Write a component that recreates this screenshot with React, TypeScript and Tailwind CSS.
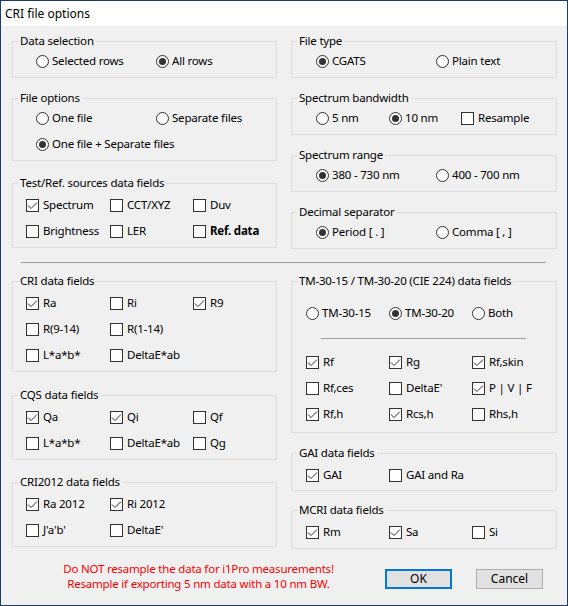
import React from "react";

type Item = { label: string; checked?: boolean; bold?: boolean; w?: string };

function CheckBox({ label, checked, bold, w }: Item) {
  return (
    <div className={`flex items-center h-[20px] shrink-0 ${w ?? ""}`}>
      <span className="w-[13px] h-[13px] border border-[#333333] bg-white flex items-center justify-center shrink-0">
        {checked && (
          <svg width="11" height="11" viewBox="0 0 11 11">
            <path d="M1 5.5 L4 8.5 L10 2.5" stroke="#333333" strokeWidth="1" fill="none" />
          </svg>
        )}
      </span>
      <span className={`ml-[4px] whitespace-nowrap ${bold ? "font-bold" : ""}`}>{label}</span>
    </div>
  );
}

function Radio({ label, checked, w }: Item) {
  return (
    <div className={`flex items-center h-[20px] shrink-0 ${w ?? ""}`}>
      <span className="w-[13px] h-[13px] rounded-full border border-[#333333] bg-white flex items-center justify-center shrink-0">
        {checked && <span className="w-[7px] h-[7px] rounded-full bg-[#333333]" />}
      </span>
      <span className="ml-[3px] whitespace-nowrap">{label}</span>
    </div>
  );
}

function Group({
  title,
  className,
  children,
}: {
  title: string;
  className?: string;
  children: React.ReactNode;
}) {
  return (
    <fieldset className={`border border-[#dcdcdc] m-0 p-0 min-w-0 ${className ?? ""}`}>
      <legend className="ml-[5px] px-[2px] leading-[16px]">{title}</legend>
      {children}
    </fieldset>
  );
}

export default function App() {
  return (
    <div className="w-[568px] h-[606px] border border-[#1d3b68] bg-[#f0f0f0] flex flex-col text-[11.5px] tracking-[-0.2px] leading-[16px] text-black font-['Noto_Sans',sans-serif] overflow-hidden">
      <div className="h-[25px] bg-white pl-[4px] flex items-center shrink-0 text-[12px] tracking-normal">CRI file options</div>

      <div className="px-[11px] pt-[7px] flex flex-col">
        {/* top section */}
        <div className="grid grid-cols-[265px_266px] gap-x-[14px] items-start">
          <div className="flex flex-col">
            <Group title="Data selection">
              <div className="pt-[2px] pb-[6px] pl-[23px] flex">
                <Radio label="Selected rows" w="w-[120px]" />
                <Radio label="All rows" checked />
              </div>
            </Group>
            <Group title="File options" className="mt-[12px]">
              <div className="pt-[2px] pb-[6px] pl-[23px] flex flex-col gap-[6px]">
                <div className="flex">
                  <Radio label="One file" w="w-[120px]" />
                  <Radio label="Separate files" />
                </div>
                <Radio label="One file + Separate files" checked />
              </div>
            </Group>
            <Group title="Test/Ref. sources data fields" className="mt-[14px]">
              <div className="pt-[4px] pb-[6px] pl-[13px] flex flex-col gap-[6px]">
                <div className="flex">
                  <CheckBox label="Spectrum" checked w="w-[84px]" />
                  <CheckBox label="CCT/XYZ" w="w-[83px]" />
                  <CheckBox label="Duv" />
                </div>
                <div className="flex">
                  <CheckBox label="Brightness" w="w-[84px]" />
                  <CheckBox label="LER" w="w-[83px]" />
                  <CheckBox label="Ref. data" bold />
                </div>
              </div>
            </Group>
          </div>

          <div className="flex flex-col">
            <Group title="File type">
              <div className="pt-[2px] pb-[6px] pl-[24px] flex">
                <Radio label="CGATS" checked w="w-[120px]" />
                <Radio label="Plain text" />
              </div>
            </Group>
            <Group title="Spectrum bandwidth" className="mt-[12px]">
              <div className="pt-[2px] pb-[6px] pl-[24px] flex">
                <Radio label="5 nm" w="w-[73px]" />
                <Radio label="10 nm" checked w="w-[72px]" />
                <CheckBox label="Resample" />
              </div>
            </Group>
            <Group title="Spectrum range" className="mt-[12px]">
              <div className="pt-[2px] pb-[6px] pl-[24px] flex">
                <Radio label="380 - 730 nm" checked w="w-[120px]" />
                <Radio label="400 - 700 nm" />
              </div>
            </Group>
            <Group title="Decimal separator" className="mt-[12px]">
              <div className="pt-[2px] pb-[6px] pl-[24px] flex">
                <Radio label="Period [ . ]" checked w="w-[120px]" />
                <Radio label="Comma [ , ]" />
              </div>
            </Group>
          </div>
        </div>

        {/* separator */}
        <div className="mt-[13px] mb-[10px] ml-[9px] w-[525px] h-px bg-[#a0a0a0]" />

        {/* bottom section */}
        <div className="grid grid-cols-[265px_266px] gap-x-[14px] items-start">
          <div className="flex flex-col">
            <Group title="CRI data fields">
              <div className="pt-[4px] pb-[6px] pl-[13px] flex flex-col gap-[6px]">
                <div className="flex">
                  <CheckBox label="Ra" checked w="w-[84px]" />
                  <CheckBox label="Ri" w="w-[83px]" />
                  <CheckBox label="R9" checked />
                </div>
                <div className="flex">
                  <CheckBox label="R(9-14)" w="w-[84px]" />
                  <CheckBox label="R(1-14)" w="w-[83px]" />
                </div>
                <div className="flex">
                  <CheckBox label="L*a*b*" w="w-[84px]" />
                  <CheckBox label="DeltaE*ab" w="w-[83px]" />
                </div>
              </div>
            </Group>
            <Group title="CQS data fields" className="mt-[15px]">
              <div className="pt-[4px] pb-[6px] pl-[13px] flex flex-col gap-[6px]">
                <div className="flex">
                  <CheckBox label="Qa" checked w="w-[84px]" />
                  <CheckBox label="Qi" checked w="w-[83px]" />
                  <CheckBox label="Qf" />
                </div>
                <div className="flex">
                  <CheckBox label="L*a*b*" w="w-[84px]" />
                  <CheckBox label="DeltaE*ab" w="w-[83px]" />
                  <CheckBox label="Qg" />
                </div>
              </div>
            </Group>
            <Group title="CRI2012 data fields" className="mt-[14px]">
              <div className="pt-[4px] pb-[6px] pl-[13px] flex flex-col gap-[6px]">
                <div className="flex">
                  <CheckBox label="Ra 2012" checked w="w-[84px]" />
                  <CheckBox label="Ri 2012" checked w="w-[83px]" />
                </div>
                <div className="flex">
                  <CheckBox label="J'a'b'" w="w-[84px]" />
                  <CheckBox label="DeltaE'" w="w-[83px]" />
                </div>
              </div>
            </Group>
          </div>

          <div className="flex flex-col">
            <Group title="TM-30-15 / TM-30-20 (CIE 224) data fields">
              <div className="pt-[14px] pb-[8px] pl-[14px] flex flex-col">
                <div className="flex">
                  <Radio label="TM-30-15" w="w-[83px]" />
                  <Radio label="TM-30-20" checked w="w-[83px]" />
                  <Radio label="Both" />
                </div>
                <div className="mt-[15px] mb-[13px] ml-[15px] w-[205px] h-px bg-[#a0a0a0]" />
                <div className="flex flex-col gap-[6px]">
                  <div className="flex">
                    <CheckBox label="Rf" checked w="w-[83px]" />
                    <CheckBox label="Rg" checked w="w-[83px]" />
                    <CheckBox label="Rf,skin" checked />
                  </div>
                  <div className="flex">
                    <CheckBox label="Rf,ces" w="w-[83px]" />
                    <CheckBox label="DeltaE'" w="w-[83px]" />
                    <CheckBox label="P | V | F" checked />
                  </div>
                  <div className="flex">
                    <CheckBox label="Rf,h" checked w="w-[83px]" />
                    <CheckBox label="Rcs,h" checked w="w-[83px]" />
                    <CheckBox label="Rhs,h" />
                  </div>
                </div>
              </div>
            </Group>
            <Group title="GAI data fields" className="mt-[12px]">
              <div className="pt-[4px] pb-[5px] pl-[14px] flex">
                <CheckBox label="GAI" checked w="w-[83px]" />
                <CheckBox label="GAI and Ra" />
              </div>
            </Group>
            <Group title="MCRI data fields" className="mt-[11px]">
              <div className="pt-[4px] pb-[6px] pl-[14px] flex">
                <CheckBox label="Rm" checked w="w-[83px]" />
                <CheckBox label="Sa" checked w="w-[83px]" />
                <CheckBox label="Si" />
              </div>
            </Group>
          </div>
        </div>

        {/* footer */}
        <div className="mt-[12px] flex items-start">
          <div className="w-[373px] text-center text-[#ff0000] leading-[15px]">
            <div>Do NOT resample the data for i1Pro measurements!</div>
            <div>Resample if exporting 5 nm data with a 10 nm BW.</div>
          </div>
          <button className="mt-[8px] w-[67px] h-[20px] border-2 border-[#0078d7] bg-[#e1e1e1] flex items-center justify-center leading-none text-[12px] tracking-normal">
            OK
          </button>
          <button className="mt-[8px] ml-[24px] w-[67px] h-[20px] border border-[#adadad] bg-[#e1e1e1] flex items-center justify-center leading-none text-[12px] tracking-normal">
            Cancel
          </button>
        </div>
      </div>
    </div>
  );
}
